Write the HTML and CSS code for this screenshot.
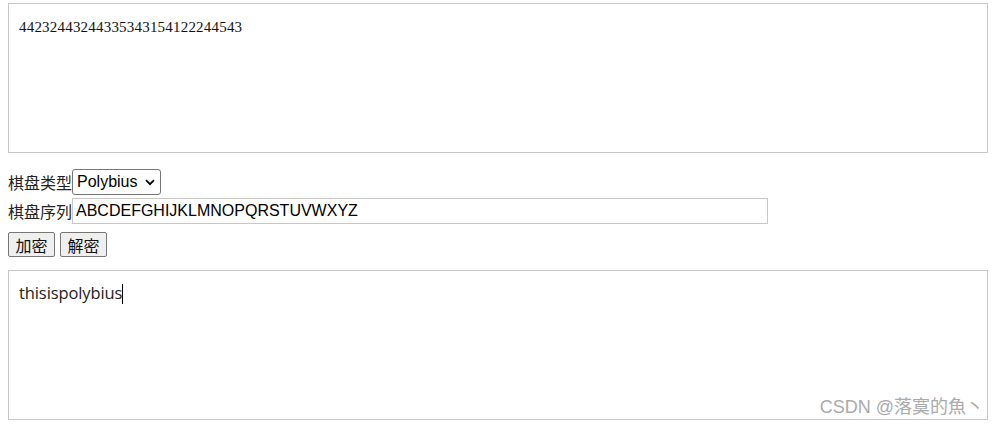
FILE: index.html
```html
<!DOCTYPE html>
<html>
<head>
<meta charset="utf-8">
<link rel="stylesheet" href="styles.css">
</head>
<body>
<div class="page">
  <div class="box box-top"><span class="mono">44232443244335343154122244543</span></div>
  <div class="row row-select">
    <span class="label">棋盘类型</span>
    <div class="select"><span>Polybius</span>
      <svg width="10" height="7" viewBox="0 0 10 7"><path d="M1 1.2 L5 5.2 L9 1.2" fill="none" stroke="#000" stroke-width="1.8"/></svg>
    </div>
  </div>
  <div class="row row-input">
    <span class="label">棋盘序列</span>
    <div class="input">ABCDEFGHIJKLMNOPQRSTUVWXYZ</div>
  </div>
  <div class="row row-buttons">
    <div class="btn">加密</div>
    <div class="btn">解密</div>
  </div>
  <div class="box box-bottom">
    <span class="plain">thisispolybius</span><span class="caret"></span>
    <div class="watermark">CSDN @落寞的魚丶</div>
  </div>
</div>
</body>
</html>
```
FILE: styles.css
```css
html, body { margin: 0; padding: 0; background: #fff; }
body { font-family: "Liberation Sans", "Noto Sans CJK SC", sans-serif; font-size: 16px; color: #000; }
.page { padding: 3px 11px 0 8px; display: flex; flex-direction: column; }
.box { border: 1px solid #c8c8c8; height: 148px; box-sizing: content-box; padding: 0 10px; position: relative; }
.box-top { padding-top: 14px; height: 134px; }
.mono { font-family: "Liberation Serif", serif; font-size: 15px; letter-spacing: 0.2px; line-height: 16px; color: #111; }
.row { display: flex; align-items: center; }
.label { font-family: "Noto Sans CJK SC", sans-serif; font-size: 16px; line-height: 20px; color: #222; }
.row-select { margin-top: 16px; height: 26px; }
.select { border: 1px solid #767676; border-radius: 3px; box-sizing: border-box; width: 89px; height: 26px; display: flex; align-items: center; justify-content: space-between; padding: 0 5px 0 4px; font-size: 16px; }
.row-input { margin-top: 3px; height: 26px; }
.input { width: 696px; height: 26px; box-sizing: border-box; border: 1px solid #c8c8c8; display: flex; align-items: center; padding: 0 3px; font-size: 16px; }
.row-buttons { margin-top: 8px; height: 25px; gap: 5px; }
.btn { font-family: "Noto Sans CJK SC", sans-serif; font-size: 16px; border: 1px solid #767676; border-radius: 2px; background: #efefef; height: 25px; box-sizing: border-box; width: 47px; display: flex; align-items: center; justify-content: center; color: #111; }
.box-bottom { margin-top: 13px; padding-top: 12px; height: 136px; }
.plain { font-family: "Open Sans", sans-serif; font-size: 16.5px; line-height: 20px; color: #222; letter-spacing: -0.1px; }
.caret { display: inline-block; width: 1px; height: 20px; background: #000; vertical-align: -5px; }
.watermark { position: absolute; right: 3px; bottom: 1px; font-size: 18px; color: #aaa; font-family: "Liberation Sans", "Noto Sans CJK SC", sans-serif; }
```
